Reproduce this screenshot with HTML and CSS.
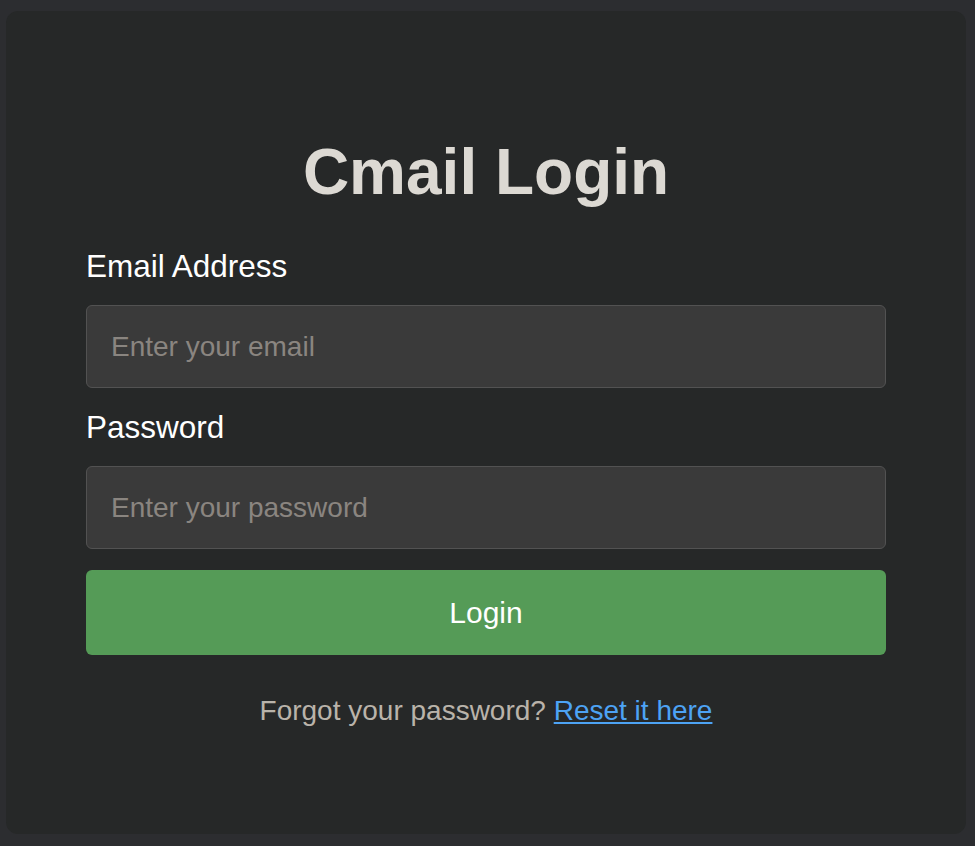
FILE: index.html
```html
<!DOCTYPE html>
<html lang="en">
<head>
<meta charset="utf-8">
<title>Cmail Login</title>
<link rel="stylesheet" href="styles.css">
</head>
<body>
  <main class="card">
    <h1 class="title">Cmail Login</h1>
    <form class="form">
      <label class="label" for="email">Email Address</label>
      <input class="input" id="email" type="email" placeholder="Enter your email">
      <label class="label" for="password">Password</label>
      <input class="input" id="password" type="password" placeholder="Enter your password">
      <button class="button" type="button">Login</button>
    </form>
    <p class="forgot">Forgot your password? <a class="link" href="#">Reset it here</a></p>
  </main>
</body>
</html>
```

FILE: styles.css
```css
html, body {
  margin: 0;
  padding: 0;
  background: #2c2d30;
}

body {
  font-family: "Liberation Sans", Arial, Helvetica, sans-serif;
  padding: 11px 9px 12px 6px;
}

.card {
  box-sizing: border-box;
  width: 960px;
  height: 823px;
  background: #262828;
  border-radius: 12px;
  padding: 125px 80px 0 80px;
}

.title {
  margin: 0 0 39px 0;
  font-size: 64px;
  line-height: 73px;
  font-weight: 700;
  text-align: center;
  color: #dcd9d3;
}

.form {
  display: flex;
  flex-direction: column;
}

.label {
  display: block;
  font-size: 31.5px;
  line-height: 36px;
  color: #ffffff;
  margin-bottom: 21px;
}

.input {
  box-sizing: border-box;
  width: 100%;
  height: 83px;
  margin: 0 0 21px 0;
  padding: 0 24px;
  background: #3a3a3a;
  border: 1px solid #525252;
  border-radius: 6px;
  font-family: "Liberation Sans", Arial, Helvetica, sans-serif;
  font-size: 28px;
  color: #e8e6e3;
  outline: none;
}

.input::placeholder {
  color: #8a8580;
  opacity: 1;
}

.button {
  box-sizing: border-box;
  width: 100%;
  height: 85px;
  margin: 0;
  border: none;
  border-radius: 6px;
  background: #559b57;
  color: #ffffff;
  font-family: "Liberation Sans", Arial, Helvetica, sans-serif;
  font-size: 30px;
  cursor: pointer;
}

.forgot {
  margin: 40px 0 0 0;
  font-size: 28px;
  line-height: 32px;
  text-align: center;
  color: #b9b3aa;
}

.link {
  color: #4da3f4;
  text-decoration: underline;
}
```
